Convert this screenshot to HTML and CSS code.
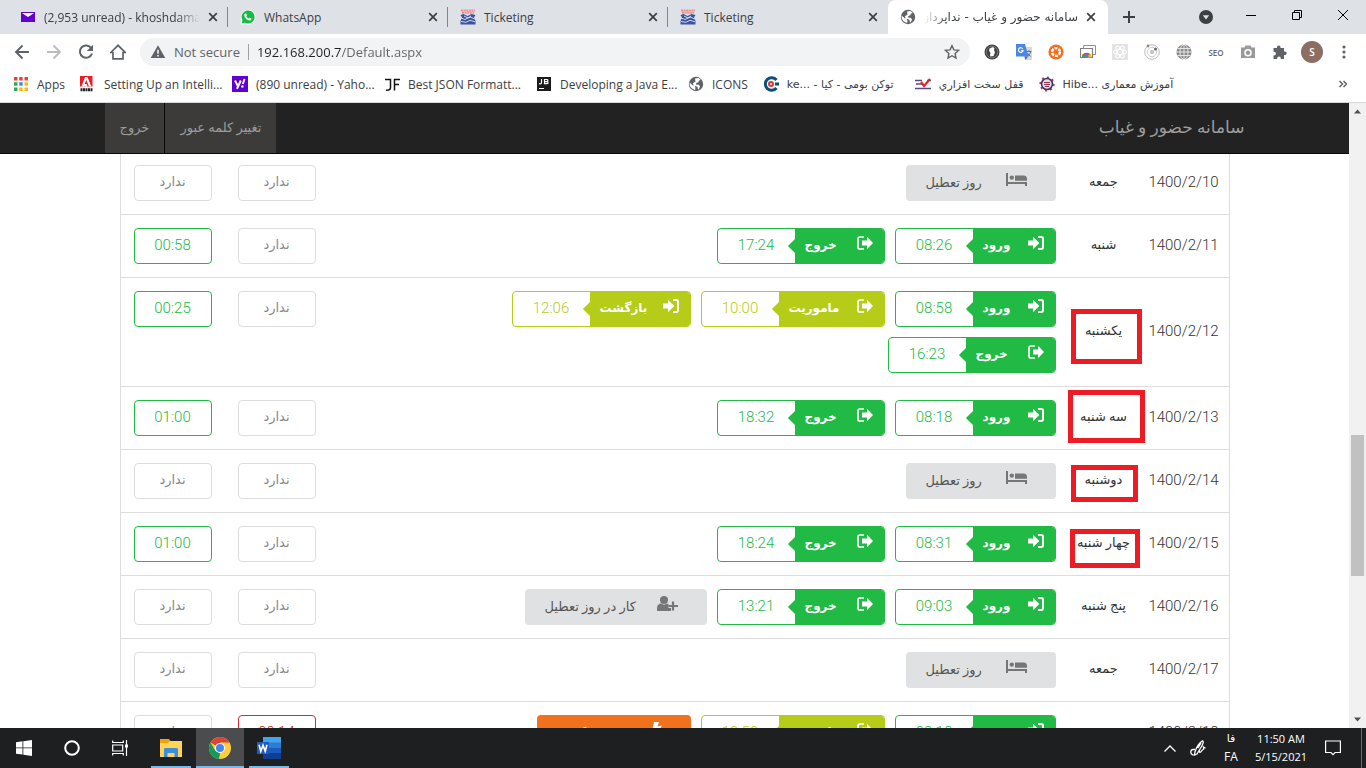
FILE: index.html
```html
<!DOCTYPE html>
<html lang="fa">
<head>
<meta charset="utf-8">
<meta name="viewport" content="width=device-width, initial-scale=1">
<title>سامانه حضور و غیاب - نداپرداز</title>
<link rel="stylesheet" href="styles.css">
</head>
<body>
<svg class="sprite" aria-hidden="true">
  <symbol id="i-close" viewBox="0 0 10 10"><path d="M1.2 1.2l7.6 7.6M8.8 1.2L1.2 8.8" stroke="currentColor" stroke-width="1.7" fill="none"/></symbol>
  <symbol id="i-globe" viewBox="0 0 16 16"><circle cx="8" cy="8" r="7.2" fill="#5f6368"/><path d="M1.5 6.4l3.2 2.8 1.6.3 1 1.5v2.900l-1.400-.3C3 12.500 1.300 9.800 1.500 6.400zM7 2.500l3.500-.6 2.300 1.900-2 1-.4 1.500-2.300.8.2 1.600h2.500l1.200 1.800-1.300 2.900-.9-.4-.3-2.300-3.700-1.100-.9-2 1-1.200 1.600-.7z" fill="#fff"/></symbol>
  <symbol id="i-ticket" viewBox="0 0 16 16"><path d="M1 1.500h14M2 3.800h12" stroke="#ef8d8d" stroke-width="2" stroke-dasharray="2 .6"/><path d="M.5 6l3-1 4 2 4-2 4 1-1.500 2.500L15.500 12v3.500H.5V12L2 8.500z" fill="#3c53a0"/><path d="M1 9l4 1.500 5-2.500 5 2M1 12.500l5 .8 4-2 5 1.500M4 7l4 2 3-2" stroke="#dfe4f2" stroke-width=".9" fill="none"/></symbol>
  <symbol id="i-in" viewBox="0 0 16 14"><path d="M0 4.500h5V.8L11.300 7 5 13.200V9.500H0z" fill="currentColor"/><path d="M10 1h3.300C14.400 1 15 1.700 15 2.700v8.600c0 1-.6 1.700-1.700 1.700H10" stroke="currentColor" stroke-width="2" fill="none"/></symbol>
  <symbol id="i-out" viewBox="0 0 16 14"><path d="M5 4.500h5V.8L16 7l-6 6.200V9.500H5z" fill="currentColor"/><path d="M7 1H2.700C1.600 1 1 1.700 1 2.700v8.600c0 1 .6 1.700 1.700 1.700H7" stroke="currentColor" stroke-width="1.700" fill="none"/></symbol>
  <symbol id="i-bed" viewBox="0 0 21 14"><path d="M0 0h2v9h19v4h-2v-2H2v2H0z" fill="currentColor"/><circle cx="5.800" cy="4.600" r="2.200" fill="currentColor"/><path d="M9 2.500h8.500C20 2.500 21 4 21 6v1.800H9z" fill="currentColor"/></symbol>
  <symbol id="i-user" viewBox="0 0 21 16"><circle cx="7" cy="4" r="4" fill="currentColor"/><path d="M0 15v-3c0-3 2-4.500 4-4.500 2 1.500 4 1.500 6 0l1.500.6V12h2.500v3z" fill="currentColor"/><path d="M16 5.500v9M11.500 10H21" stroke="currentColor" stroke-width="2.200"/></symbol>
  <symbol id="i-bolt" viewBox="0 0 11 16"><path d="M3 0h5L6.500 4.500 11 3.500 4 16l1.500-8L1 9z" fill="currentColor"/></symbol>
</svg>

<header class="browser">
  <div class="tabs" role="tablist">
    <button class="tab" role="tab" type="button">
      <svg class="ico" viewBox="0 0 16 16"><path d="M1 3h14v10H1z" fill="#6001d2"/><path d="M1.800 4l6.200 4 6.200-4z" fill="#fff"/></svg>
      <span class="tab-title tab-title--fade">(2,953 unread) - khoshdaman.</span><svg class="x"><use href="#i-close"/></svg>
    </button>
    <button class="tab" role="tab" type="button">
      <svg class="ico" viewBox="0 0 16 16"><path d="M.5 15.500l1-4A7.500 7.500 0 1 1 5 15z" fill="#fff"/><path d="M1.700 14.300l.8-3A6.500 6.500 0 1 1 5 13.700z" fill="#12bd44"/><path d="M5 4.500l1.200-.1.900 1.900-.7 1c.6 1.200 1.400 1.900 2.500 2.300l.8-.9 1.900.9c0 1.300-1 1.900-2.100 1.800C6.700 11 4.300 8.500 4.200 6.200c0-.8.3-1.300.8-1.700z" fill="#fff"/></svg>
      <span class="tab-title">WhatsApp</span><svg class="x"><use href="#i-close"/></svg>
    </button>
    <button class="tab" role="tab" type="button">
      <svg class="ico"><use href="#i-ticket"/></svg>
      <span class="tab-title">Ticketing</span><svg class="x"><use href="#i-close"/></svg>
    </button>
    <button class="tab" role="tab" type="button">
      <svg class="ico"><use href="#i-ticket"/></svg>
      <span class="tab-title">Ticketing</span><svg class="x"><use href="#i-close"/></svg>
    </button>
    <button class="tab tab--active" role="tab" type="button" aria-selected="true">
      <svg class="ico"><use href="#i-globe"/></svg>
      <span class="tab-title tab-title--fa" dir="rtl">سامانه حضور و غیاب - نداپرداز</span><svg class="x"><use href="#i-close"/></svg>
    </button>
    <button class="new-tab" type="button" aria-label="New tab"><svg viewBox="0 0 12 12" width="12" height="12"><path d="M6 0v12M0 6h12" stroke="#3c4043" stroke-width="2"/></svg></button>
    <span class="grow"></span>
    <button class="tab-search" type="button" aria-label="Search tabs"><svg viewBox="0 0 14 14" width="14" height="14"><circle cx="7" cy="7" r="7" fill="#3c4043"/><path d="M3.800 5.200h6.400L7 9.600z" fill="#dee1e6"/></svg></button>
    <button class="win" type="button" aria-label="Minimize"><svg viewBox="0 0 10 10" width="10" height="10"><path d="M0 5.500h10" stroke="#000"/></svg></button>
    <button class="win" type="button" aria-label="Restore"><svg viewBox="0 0 10 10" width="10" height="10"><path d="M.5 2.500h7v7h-7zM2.500 2.500v-2h7v7h-2" stroke="#000" fill="none"/></svg></button>
    <button class="win" type="button" aria-label="Close"><svg viewBox="0 0 10 10" width="10" height="10"><path d="M0 0l10 10M10 0L0 10" stroke="#000"/></svg></button>
  </div>

  <div class="toolbar">
    <button class="tool" type="button" aria-label="Back"><svg class="ico" viewBox="0 0 16 16"><path d="M15 8H2M8.500 1.500L2 8l6.500 6.500" stroke="#5f6368" stroke-width="1.900" fill="none"/></svg></button>
    <button class="tool" type="button" aria-label="Forward"><svg class="ico" viewBox="0 0 16 16"><path d="M1 8h13M7.500 1.500L14 8l-6.500 6.500" stroke="#babcbe" stroke-width="1.900" fill="none"/></svg></button>
    <button class="tool" type="button" aria-label="Reload"><svg class="ico" viewBox="0 0 16 16"><path d="M13.300 4.200A6.200 6.200 0 1 0 14 9.500" stroke="#5f6368" stroke-width="2" fill="none"/><path d="M15 .8v6.200H8.800z" fill="#5f6368"/></svg></button>
    <button class="tool" type="button" aria-label="Home"><svg class="ico" viewBox="0 0 16 16"><path d="M.8 8.500L8 1.300l7.200 7.200H13v6.300H3V8.500z" stroke="#5f6368" stroke-width="1.700" fill="none"/></svg></button>
    <div class="omnibox">
      <svg class="ico" viewBox="0 0 16 16"><path d="M8 1.200L15.300 14H.7z" fill="#5f6368"/><path d="M8 5.800v4M8 11v1.600" stroke="#f1f3f4" stroke-width="1.600"/></svg>
      <label class="secure" for="url">Not secure</label>
      <input id="url" class="url" type="text" value="192.168.200.7/Default.aspx">
      <svg class="ico" viewBox="0 0 16 16"><path d="M8 1.700l1.900 4.200 4.600.5-3.400 3.100.9 4.500-4-2.300L4 14l.9-4.500-3.400-3.100 4.600-.5z" stroke="#5f6368" stroke-width="1.400" fill="none"/></svg>
    </div>
    <button class="tool" type="button" aria-label="Session"><svg class="ico" viewBox="0 0 16 16"><circle cx="8" cy="8" r="7.500" fill="#444"/><circle cx="8" cy="8" r="5.800" stroke="#777" stroke-width="1" fill="none"/><path d="M5.500 4.500L9 3l1.500 1.500L10 6l1 2.500-1.500 3.500-3 .5L6 11l.5-2L5 6.500z" fill="#fff"/></svg></button>
    <button class="tool" type="button" aria-label="Translate"><svg class="ico" viewBox="0 0 16 16"><path d="M6 3h10v13H9z" fill="#d8d8d8"/><path d="M0 0h9l3.500 12.500H0z" fill="#4a86e8"/><path d="M8.500 12.500H12L9.500 16z" fill="#3367d6"/><path d="M6.700 4.800A2.300 2.300 0 1 0 7 6.500H5" stroke="#fff" stroke-width="1.200" fill="none"/><path d="M10.500 7.500h5M13 6v1.500M14.500 8c-.5 2-1.500 3.500-3 4.500M11.500 9c.8 1.500 1.700 2.500 3.200 3.500" stroke="#55799b" stroke-width="1" fill="none"/></svg></button>
    <button class="tool" type="button" aria-label="Capture"><svg class="ico" viewBox="0 0 16 16"><circle cx="8" cy="8" r="7.600" fill="#f4701f"/><circle cx="8" cy="8" r="3.900" stroke="#fff" stroke-width="2.400" stroke-dasharray="3 1.100" fill="none"/></svg></button>
    <button class="tool" type="button" aria-label="Web store"><svg class="ico" viewBox="0 0 16 16"><path d="M3.500 4V1.500h12v9H13" stroke="#909090" fill="none"/><path d="M.5 4.500h12v9H.5z" stroke="#808080" stroke-width="1.200" fill="#fff"/><path d="M1.800 13.500a4.800 4.800 0 0 1 9.600 0z" fill="#db4437"/><path d="M1.800 13.500l.8-3.500 3 3.500z" fill="#34a853"/><path d="M8 11l3-1 .5 3.500H8z" fill="#fbbc05"/><circle cx="6.600" cy="12" r="2" fill="#4285f4"/></svg></button>
    <button class="tool" type="button" aria-label="React tools"><svg class="ico" viewBox="0 0 16 16"><path d="M0 0h16v16H0z" fill="#e4e4e4"/><g stroke="#fff" fill="none"><ellipse cx="8" cy="8" rx="6.500" ry="2.500"/><ellipse cx="8" cy="8" rx="6.500" ry="2.500" transform="rotate(60 8 8)"/><ellipse cx="8" cy="8" rx="6.500" ry="2.500" transform="rotate(120 8 8)"/></g></svg></button>
    <button class="tool" type="button" aria-label="Orbit"><svg class="ico" viewBox="0 0 16 16"><circle cx="8" cy="8" r="7.300" stroke="#bbb" fill="none"/><circle cx="8" cy="8" r="4.700" stroke="#ccc" fill="none"/><circle cx="8" cy="8" r="2.200" fill="#c5c5c5"/><circle cx="4" cy="2" r="1.400" fill="#888"/><circle cx="11.500" cy="5" r="1.500" fill="#666"/></svg></button>
    <button class="tool" type="button" aria-label="Web"><svg class="ico" viewBox="0 0 16 16"><circle cx="8" cy="8" r="7.600" fill="#8a8a8a"/><path d="M8 0v16M0 8h16M1.500 4.500h13M1.500 11.500h13" stroke="#eee" stroke-width=".9"/><ellipse cx="8" cy="8" rx="4" ry="7.600" stroke="#eee" stroke-width=".9" fill="none"/></svg></button>
    <button class="tool tool--seo" type="button">SEO</button>
    <button class="tool" type="button" aria-label="Screenshot"><svg class="ico" viewBox="0 0 16 16"><path d="M1 3.500h3.500l1-2h5l1 2H15V14H1z" fill="#9a9a9a"/><circle cx="8" cy="8.700" r="3" stroke="#fff" stroke-width="1.500" fill="none"/></svg></button>
    <button class="tool" type="button" aria-label="Extensions"><svg class="ico" viewBox="0 0 16 16"><path d="M1.500 4H5c-.6-3.300 4.100-3.300 3.500 0H12v3.500c3.600-.6 3.600 4.200 0 3.600V15H8.800c.4-3.300-4-3.300-3.600 0H1.500v-3.600c3.200.3 3.200-4 0-3.700z" fill="#5f6368"/></svg></button>
    <button class="avatar" type="button">S</button>
    <button class="tool" type="button" aria-label="Menu"><svg class="ico" viewBox="0 0 16 16"><g fill="#5f6368"><circle cx="8" cy="3" r="1.600"/><circle cx="8" cy="8" r="1.600"/><circle cx="8" cy="13" r="1.600"/></g></svg></button>
  </div>

  <nav class="bookmarks" aria-label="Bookmarks">
    <a class="bm" href="#"><svg class="ico" viewBox="0 0 16 16"><path d="M1 1h3.500v3.500H1zM6.200 1h3.500v3.500H6.200zM11.500 1H15v3.500h-3.500z" fill="#ea4335"/><path d="M1 6.200h3.500v3.500H1zM1 11.500h3.500V15H1z" fill="#34a853"/><path d="M6.200 6.200h3.500v3.500H6.200z" fill="#4285f4"/><path d="M11.500 6.200H15v3.500h-3.500zM6.200 11.500h3.500V15H6.200zM11.500 11.500H15V15h-3.500z" fill="#fbbc05"/></svg><span>Apps</span></a>
    <a class="bm bm--wide" href="#"><svg class="ico" viewBox="0 0 16 16"><path d="M0 0h12.500v10.500H0z" fill="#ed1c24"/><path d="M1.500 10.500L5 1h2.500l3.800 9.500H9L6.300 4l-1.600 4h2l.8 2.500z" fill="#fff"/><path d="M.5 13.800h12" stroke="#222" stroke-width="3" stroke-dasharray="2 .5"/></svg><span>Setting Up an Intelli...</span></a>
    <a class="bm bm--wide" href="#"><svg class="ico" viewBox="0 0 16 16"><path d="M0 0h16v16H0z" fill="#6001d2"/><path d="M3 4.500l2.700 5.200M8.800 4.500L5 12.800" stroke="#fff" stroke-width="2"/><path d="M12.500 3l-1.700 5" stroke="#fff" stroke-width="2"/><circle cx="10.400" cy="10.500" r="1.200" fill="#fff"/></svg><span>(890 unread) - Yaho...</span></a>
    <a class="bm bm--wide" href="#"><svg class="ico" viewBox="0 0 16 16"><path d="M1 3.500h5.500v8.200c0 2-1.500 2.500-4.500 2.500M10.500 14.500v-11H16M10.500 8.500h4.500" stroke="#111" stroke-width="1.500" fill="none"/></svg><span>Best JSON Formatt...</span></a>
    <a class="bm bm--wide" href="#"><svg class="ico" viewBox="0 0 16 16"><path d="M1 1h14v14H1z" fill="#1b1b1b"/><path d="M5.500 3v3.700c0 1-1 1.300-2.500 1M8.500 3.500v4.200h2.300c1.700 0 1.700-2 0-2.100 1.500-.2 1.500-2.100 0-2.100zM8.500 5.600h2.300M3 12.500h5" stroke="#fff" stroke-width="1.200" fill="none"/></svg><span>Developing a Java E...</span></a>
    <a class="bm" href="#"><svg class="ico"><use href="#i-globe"/></svg><span>ICONS</span></a>
    <a class="bm bm--wide" href="#"><svg class="ico" viewBox="0 0 16 16"><path d="M13.500 4A6.300 6.300 0 1 0 13.500 12" stroke="#0d4f7c" stroke-width="3" fill="none"/><path d="M12 8h4" stroke="#0d4f7c" stroke-width="3"/><circle cx="8" cy="8" r="3" fill="#d33"/><circle cx="8" cy="8" r="1" fill="#fff"/></svg><span class="bm-fa">ke... - توکن بومی - کیا</span></a>
    <a class="bm" href="#"><svg class="ico" viewBox="0 0 16 16"><path d="M0 4.500h7M12 4.500h4M1 8h6M0 12.500h16" stroke="#5a4a82" stroke-width="1.500"/><path d="M6 6l3 4 6-7" stroke="#e3202b" stroke-width="2.200" fill="none"/></svg><span class="bm-fa">قفل سخت افزاري</span></a>
    <a class="bm" href="#"><svg class="ico" viewBox="0 0 16 16"><circle cx="8" cy="8" r="5.500" stroke="#2c3972" stroke-width="1.600" fill="#f3d9dd"/><circle cx="8" cy="8" r="6.800" stroke="#b23345" stroke-width="1.600" stroke-dasharray="2 3.300" fill="none"/><path d="M5 6.500h6M5 8.500h6M6 10.500h4" stroke="#93304a" stroke-width="1.200"/></svg><span class="bm-fa" dir="rtl">آموزش معماری ...Hibe</span></a>
    <span class="grow"></span>
    <button class="more" type="button" aria-label="More bookmarks"><svg viewBox="0 0 8 8" width="8" height="8"><path d="M.5 1l3 3-3 3M4.500 1l3 3-3 3" stroke="#5f6368" stroke-width="1.500" fill="none"/></svg></button>
  </nav>
</header>

<div class="viewport">
  <div class="page" dir="rtl">
    <nav class="navbar">
      <div class="container navbar-row">
        <a class="brand" href="#">سامانه حضور و غیاب</a>
        <div class="nav-links"><a href="#">تغییر کلمه عبور</a><a href="#">خروج</a></div>
      </div>
    </nav>
    <main class="container sheet">
      <table class="log">
        <colgroup><col class="c-date"><col class="c-day"><col><col class="c-box"><col class="c-box"></colgroup>
        <tbody>
        <tr><td class="date">1400/2/10</td><td class="day">جمعه</td>
          <td><div class="tags"><span class="note"><svg class="wide"><use href="#i-bed"/></svg>روز تعطیل</span></div></td>
          <td><span class="box">ندارد</span></td><td><span class="box">ندارد</span></td></tr>
        <tr><td class="date">1400/2/11</td><td class="day">شنبه</td>
          <td><div class="tags"><span class="tag"><b class="in"><svg><use href="#i-in"/></svg>ورود</b><time>08:26</time></span><span class="tag"><b class="out"><svg><use href="#i-out"/></svg>خروج</b><time>17:24</time></span></div></td>
          <td><span class="box">ندارد</span></td><td><span class="box box--ok">00:58</span></td></tr>
        <tr><td class="date">1400/2/12</td><td class="day"><span class="mark mark--a"></span>یکشنبه</td>
          <td><div class="tags"><span class="tag"><b class="in"><svg><use href="#i-in"/></svg>ورود</b><time>08:58</time></span><span class="tag tag--trip"><b class="mission"><svg><use href="#i-out"/></svg>ماموریت</b><time>10:00</time></span><span class="tag tag--trip"><b class="back"><svg><use href="#i-in"/></svg>بازگشت</b><time>12:06</time></span><span class="tag"><b class="out"><svg><use href="#i-out"/></svg>خروج</b><time>16:23</time></span></div></td>
          <td class="top"><span class="box">ندارد</span></td><td class="top"><span class="box box--ok">00:25</span></td></tr>
        <tr><td class="date">1400/2/13</td><td class="day"><span class="mark mark--b"></span>سه شنبه</td>
          <td><div class="tags"><span class="tag"><b class="in"><svg><use href="#i-in"/></svg>ورود</b><time>08:18</time></span><span class="tag"><b class="out"><svg><use href="#i-out"/></svg>خروج</b><time>18:32</time></span></div></td>
          <td><span class="box">ندارد</span></td><td><span class="box box--ok">01:00</span></td></tr>
        <tr><td class="date">1400/2/14</td><td class="day"><span class="mark mark--c"></span>دوشنبه</td>
          <td><div class="tags"><span class="note"><svg class="wide"><use href="#i-bed"/></svg>روز تعطیل</span></div></td>
          <td><span class="box">ندارد</span></td><td><span class="box">ندارد</span></td></tr>
        <tr><td class="date">1400/2/15</td><td class="day"><span class="mark mark--d"></span>چهار شنبه</td>
          <td><div class="tags"><span class="tag"><b class="in"><svg><use href="#i-in"/></svg>ورود</b><time>08:31</time></span><span class="tag"><b class="out"><svg><use href="#i-out"/></svg>خروج</b><time>18:24</time></span></div></td>
          <td><span class="box">ندارد</span></td><td><span class="box box--ok">01:00</span></td></tr>
        <tr><td class="date">1400/2/16</td><td class="day">پنج شنبه</td>
          <td><div class="tags"><span class="tag"><b class="in"><svg><use href="#i-in"/></svg>ورود</b><time>09:03</time></span><span class="tag"><b class="out"><svg><use href="#i-out"/></svg>خروج</b><time>13:21</time></span><span class="note note--work"><svg class="wide tall"><use href="#i-user"/></svg>کار در روز تعطیل</span></div></td>
          <td><span class="box">ندارد</span></td><td><span class="box">ندارد</span></td></tr>
        <tr><td class="date">1400/2/17</td><td class="day">جمعه</td>
          <td><div class="tags"><span class="note"><svg class="wide"><use href="#i-bed"/></svg>روز تعطیل</span></div></td>
          <td><span class="box">ندارد</span></td><td><span class="box">ندارد</span></td></tr>
        <tr><td class="date">1400/2/18</td><td class="day">شنبه</td>
          <td><div class="tags"><span class="tag"><b class="in"><svg><use href="#i-in"/></svg>ورود</b><time>08:18</time></span><span class="tag tag--trip"><b class="mission"><svg><use href="#i-out"/></svg>ماموریت</b><time>10:50</time></span><span class="note note--alert"><svg class="thin tall"><use href="#i-bolt"/></svg>تردد ناقص</span></div></td>
          <td><span class="box box--bad">00:14</span></td><td><span class="box">ندارد</span></td></tr>
        </tbody>
      </table>
    </main>
  </div>
  <div class="scrollbar" aria-hidden="true">
    <svg class="arrow" viewBox="0 0 17 17"><path d="M5 10.500l3.500-4 3.500 4z" fill="#505050"/></svg>
    <span class="before"></span><span class="thumb"></span><span class="after"></span>
    <svg class="arrow" viewBox="0 0 17 17"><path d="M5 6.500l3.500 4 3.500-4z" fill="#505050"/></svg>
  </div>
</div>

<footer class="taskbar">
  <button class="task" type="button" aria-label="Start"><svg viewBox="0 0 16 16" width="16" height="16"><path d="M0 2.200L6.500 1.300v6.200H0zM7.300 1.200L16 0v7.500H7.300zM0 8.300h6.500v6.300L0 13.700zM7.300 8.300H16V16l-8.700-1.200z" fill="#fff"/></svg></button>
  <button class="task" type="button" aria-label="Search"><svg viewBox="0 0 16 16" width="16" height="16"><circle cx="8" cy="8" r="6.800" stroke="#fff" stroke-width="2" fill="none"/></svg></button>
  <button class="task" type="button" aria-label="Task view"><svg viewBox="0 0 17 16" width="17" height="16"><path d="M.7.500v2h10.600v-2M.7 15.500v-2h10.600v2M.7 5h10v6h-10zM14.500 0v16" stroke="#fff" stroke-width="1.200" fill="none"/><path d="M13 4.500h3v3h-3z" fill="#fff"/></svg></button>
  <button class="task task--open" type="button" aria-label="File Explorer"><svg viewBox="0 0 22 20" width="22" height="20"><path d="M0 1h9l1.500 2H22v16H0z" fill="#f0a30a"/><path d="M0 5l8 0 2-2h12v16H0z" fill="#ffd35c"/><path d="M4 19v-7.500c0-1 .5-1.500 1.500-1.500h11c1 0 1.500.5 1.500 1.500V19h-3.500v-4h-7v4z" fill="#3b8edb"/></svg></button>
  <button class="task task--active" type="button" aria-label="Google Chrome"><svg viewBox="0 0 22 22" width="22" height="22"><circle cx="11" cy="11" r="11" fill="#ffcd40"/><path d="M11 11L1.500 5.500A11 11 0 0 1 20.500 5.500H11z" fill="#db4437"/><path d="M1.500 5.500L6.300 13.700 11 16l-1 6A11 11 0 0 1 1.500 5.500z" fill="#0f9d58"/><path d="M10 22l5.500-8.500L20 6z" fill="#ffcd40"/><circle cx="11" cy="11" r="5" fill="#fff"/><circle cx="11" cy="11" r="4" fill="#4285f4"/></svg></button>
  <button class="task task--open" type="button" aria-label="Word"><svg viewBox="0 0 24 22" width="24" height="22"><path d="M6 0h18v6H6z" fill="#41a5ee"/><path d="M6 5.500h18V11H6z" fill="#2b7cd3"/><path d="M6 11h18v5.500H6z" fill="#185abd"/><path d="M6 16.500h18V22H6z" fill="#103f91"/><path d="M0 5h12v12H0z" fill="#1d5bbf"/><path d="M2 7.800l1.800 6.500L6 8.200l2.200 6.100L10 7.800" stroke="#fff" stroke-width="1.600" fill="none"/></svg></button>
  <span class="grow"></span>
  <button class="tray" type="button" aria-label="Hidden icons"><svg viewBox="0 0 12 7" width="12" height="7"><path d="M.5 6.500L6 1l5.500 5.500" stroke="#fff" stroke-width="1.400" fill="none"/></svg></button>
  <button class="tray" type="button" aria-label="Pen"><svg viewBox="0 0 16 16" width="16" height="16"><path d="M5 12C6 8 9.500 2 12.500.8c1.500.7.5 3-1 5.700L7 14l-2.500 1zM8 8l3-5M5 9.500H3c-3 .5-3 5 .5 5.500M9.500 10.500c-.5 2.500 1 2.500 2 .5s3-.5 2-4l2 1.200" stroke="#fff" stroke-width="1.300" fill="none"/></svg></button>
  <button class="lang" type="button"><span class="lang-fa">فا</span><span>FA</span></button>
  <button class="clock" type="button"><span>11:50 AM</span><span>5/15/2021</span></button>
  <button class="notify" type="button" aria-label="Notifications"><svg viewBox="0 0 16 16" width="16" height="16"><path d="M.6 1h14.800v11.500H10L8 14.700l-2-2.200H.6z" stroke="#fff" stroke-width="1.200" fill="none"/></svg></button>
</footer>
</body>
</html>
```
FILE: styles.css
```css
*, *::before, *::after { box-sizing: border-box; }
body {
  margin: 0;
  height: 100vh;
  display: flex;
  flex-direction: column;
  overflow: hidden;
  background: #fff;
  font-family: "Open Sans", "DejaVu Sans", sans-serif;
  font-size: 12px;
  color: #3c4043;
}
button { border: 0; padding: 0; background: none; font: inherit; color: inherit; }
a { color: inherit; text-decoration: none; }
svg { display: block; flex: none; }
.sprite { position: absolute; width: 0; height: 0; }
.ico { width: 16px; height: 16px; }
.grow { flex: 1; }

/* Browser chrome */
.browser { flex: none; border-bottom: 1px solid #d5d7da; }
.tabs { display: flex; height: 34px; padding-left: 8px; background: #dee1e6; }
.tab {
  display: flex;
  align-items: center;
  flex: 0 1 220px;
  min-width: 0;
  gap: 8px;
  padding: 0 10px 0 12px;
  text-align: left;
  background: linear-gradient(#80868b, #80868b) right center / 1px 20px no-repeat;
}
.tab:nth-child(4) { background: none; }
.tab-title { flex: 1; overflow: hidden; white-space: nowrap; }
.tab-title--fade { mask-image: linear-gradient(to right, #000 85%, transparent); }
.tab-title--fa { text-align: right; font-family: "DejaVu Sans", sans-serif; font-size: 12px; mask-image: linear-gradient(to left, #000 85%, transparent); }
.tab--active { padding-right: 12px; background: #fff; border-radius: 8px 8px 0 0; }
.x { width: 10px; height: 10px; }
.new-tab { width: 42px; display: grid; place-items: center; }
.tab-search { width: 44px; display: grid; place-items: center; }
.win { width: 46px; height: 29px; display: grid; place-items: center; }

.toolbar { display: flex; align-items: center; height: 36px; padding: 0 6px; background: #fff; }
.tool { flex: 0 0 32px; height: 28px; display: grid; place-items: center; }
.tool--seo { font-size: 8px; font-weight: 600; color: #666; }
.omnibox {
  flex: 1;
  display: flex;
  align-items: center;
  gap: 8px;
  height: 28px;
  margin: 0 6px;
  padding: 0 10px;
  border-radius: 14px;
  background: #f1f3f4;
  font-size: 13px;
}
.secure { padding-right: 8px; border-right: 1px solid #9aa0a6; line-height: 16px; color: #5f6368; white-space: nowrap; }
.url {
  flex: 1;
  min-width: 0;
  padding: 0;
  border: 0;
  outline: 0;
  font: inherit;
  color: transparent;
  background: linear-gradient(to right, #202124 84px, #5f6368 84px);
  background-clip: text;
}
.avatar {
  width: 22px;
  height: 22px;
  margin: 0 5px;
  border-radius: 50%;
  background: #8d6e63;
  color: #fff;
  font-size: 10px;
  font-weight: 600;
}

.bookmarks { display: flex; align-items: center; gap: 15px; height: 32px; padding: 0 19px 4px 13px; }
.bm { display: flex; align-items: center; gap: 8px; white-space: nowrap; }
.bm--wide { flex: 0 1 137px; min-width: 0; }
.bm-fa { font-family: "DejaVu Sans", sans-serif; font-size: 11px; }

/* Page */
.viewport { flex: 1; min-height: 0; display: flex; }
.page { flex: 1; min-width: 0; overflow: hidden; font-family: Roboto, "DejaVu Sans", sans-serif; }
.container { max-width: 1170px; margin: 0 auto; padding: 0 15px; }
.navbar { position: relative; z-index: 1; background: #222; border-bottom: 1px solid #080808; }
.navbar-row { display: flex; justify-content: space-between; height: 50px; }
.brand { align-self: center; padding-bottom: 2px; color: #9d9d9d; font-size: 17px; }
.nav-links { display: flex; font-size: 13px; color: #9d9d9d; }
.nav-links a { display: grid; place-items: center; padding: 0 15px 2px; background: #3c3b39; }
.nav-links a + a { border-right: 1px solid #080808; }

.sheet { padding: 0 30px; margin-top: -3px; }
.log {
  width: 100%;
  table-layout: fixed;
  border-collapse: separate;
  border-spacing: 0;
  border: 1px solid #ddd;
  color: #333;
}
.c-date { width: 90px; }
.c-day { width: 70px; }
.c-box { width: 104px; }
.log td { padding: 13px; border-bottom: 1px solid #ddd; vertical-align: middle; }
.log td.top { vertical-align: top; }
.log td.date { padding: 0 0 3px; text-align: center; font-size: 15px; font-weight: 300; }
.log td.day { position: relative; padding: 0 0 3px; text-align: center; font-size: 13px; white-space: nowrap; }

.tags { display: flex; flex-wrap: wrap; gap: 10px; }
.tag {
  display: flex;
  height: 36px;
  border: 1px solid #21ba45;
  border-radius: 4px;
  color: #21ba45;
  background: #fff;
  overflow: hidden;
}
.tag--trip { border-color: #b5cc18; color: #b5cc18; }
.tag b {
  position: relative;
  display: flex;
  align-items: center;
  justify-content: space-between;
  padding: 0 11px 2px 10px;
  font-size: 12px;
  font-weight: 700;
  background: #21ba45;
  color: #fff;
}
.tag--trip b { background: #b5cc18; }
.tag b::after {
  content: "";
  position: absolute;
  left: -5px;
  top: 12px;
  width: 10px;
  height: 10px;
  background: inherit;
  transform: rotate(45deg);
}
.tag svg { width: 16px; height: 14px; margin-bottom: 4px; }
.in { width: 82px; }
.out { width: 89px; }
.mission { width: 105px; }
.back { width: 100px; }
.tag time { width: 77px; text-align: center; font-size: 15px; font-weight: 300; line-height: 33px; }

.note {
  display: flex;
  align-items: center;
  justify-content: space-between;
  width: 150px;
  height: 36px;
  padding: 0 29px 2px 20px;
  border-radius: 4px;
  background: #e0e1e2;
  color: #555;
  font-size: 13px;
}
.note--work { width: 182px; }
.note--alert { width: 154px; background: #f2711c; color: #fff; font-weight: 700; }
.note svg { color: #767676; margin-bottom: 4px; }
.note--alert svg { color: #fff; }
.wide { width: 21px; height: 14px; }
.tall { height: 16px; }
.thin { width: 11px; }

.box {
  display: block;
  height: 36px;
  border: 1px solid #ddd;
  border-radius: 4px;
  text-align: center;
  font-size: 13px;
  line-height: 32px;
  color: #888;
}
.box--ok, .box--bad { border-color: #21ba45; color: #21ba45; font-size: 15px; font-weight: 300; line-height: 33px; }
.box--bad { border-color: #db2828; color: #db2828; }

.mark { position: absolute; border: 5px solid #ed1c24; }
.mark--a { left: 2px; top: 31px; width: 71px; height: 55px; }
.mark--b { left: -1px; top: 3px; width: 77px; height: 53px; }
.mark--c { left: 2px; top: 15px; width: 67px; height: 37px; }
.mark--d { left: 1px; top: 16px; width: 70px; height: 39px; }

.scrollbar { flex: 0 0 17px; display: flex; flex-direction: column; background: #f1f1f1; }
.arrow { width: 17px; height: 17px; }
.before { flex: 315; }
.thumb { flex: 141; margin: 0 2px; background: #c1c1c1; }
.after { flex: 135; }

/* Taskbar */
.taskbar { flex: none; display: flex; height: 40px; background: #1e1f21; color: #fff; }
.task { width: 48px; display: grid; place-items: center; }
.task--open { margin-left: 3px; background: linear-gradient(#76b9ed, #76b9ed) center bottom / 40px 2px no-repeat; }
.task--active { margin-left: 1px; background: linear-gradient(#76b9ed, #76b9ed) center bottom / 100% 2px no-repeat #4b4c4d; }
.task--active + .task--open { margin-left: 1px; }
.tray { width: 28px; display: grid; place-items: center; }
.lang, .clock { display: flex; flex-direction: column; align-items: center; justify-content: center; line-height: 18px; }
.lang { width: 38px; }
.lang-fa { font-family: "DejaVu Sans", sans-serif; font-size: 11px; }
.clock { width: 62px; font-size: 11px; }
.notify { width: 50px; margin-right: 4px; padding-right: 8px; display: grid; place-items: center; border-right: 1px solid #6b6c6d; }
```
